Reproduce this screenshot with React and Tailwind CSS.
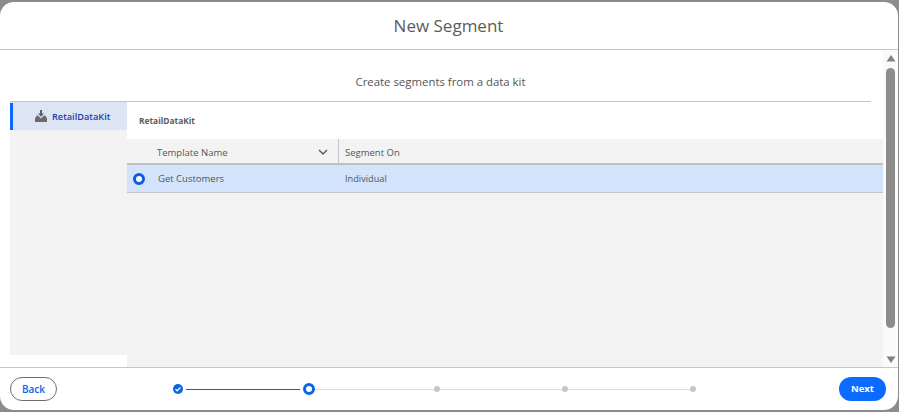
import React from "react";

function Download() {
  return (
    <svg width="14" height="14" viewBox="0 0 14 14" className="shrink-0">
      <path d="M6 1h2v3.500h2L7 7.800 4 4.500h2z" fill="#5f5f5f" />
      <path d="M2.800 6.500H4L7 9.500l3-3h1.200L13 9.200V13H1V9.200z" fill="#6a6a6a" />
    </svg>
  );
}

function Step({ state }) {
  if (state === "done")
    return (
      <span className="w-[10px] h-[10px] rounded-full bg-[#0b63e5] flex items-center justify-center shrink-0">
        <svg width="8" height="8" viewBox="0 0 8 8">
          <path d="M1.500 4.200l1.700 1.600 3.300-3.400" stroke="#fff" strokeWidth="1.300" fill="none" />
        </svg>
      </span>
    );
  if (state === "current")
    return <span className="w-[12px] h-[12px] rounded-full border-[3px] border-[#0b63f0] bg-white shrink-0" />;
  return <span className="w-[6px] h-[6px] rounded-full bg-[#c6c6c6] shrink-0" />;
}

export default function App() {
  return (
    <div className="w-[899px] h-[412px] bg-[#8c8c8c] pt-[2px] pb-[2px] pr-[1px] font-['Open_Sans','Noto_Sans',sans-serif] overflow-hidden">
      <div className="w-full h-full bg-white rounded-[14px] flex flex-col overflow-hidden">
        <div className="h-[48px] shrink-0 border-b border-[#c6c6c6] flex items-center justify-center pr-[1px] text-[17px] text-[#5c5c5c]">
          New Segment
        </div>

        <div className="h-[317px] shrink-0 flex">
          <div className="w-[883px] flex flex-col">
            <div className="pl-[10px] pr-[12px] shrink-0">
              <div className="h-[52px] border-b border-[#c6c6c6] flex items-center justify-center pt-[13px] text-[11.4px] text-[#555555]">
                Create segments from a data kit
              </div>
            </div>
            <div className="flex flex-1 pl-[10px]">
              <div className="w-[117px] h-[253px] bg-[#f3f3f3] shrink-0">
                <div className="h-[28px] bg-[#dbe5f4] flex items-center pl-[3px] relative">
                  <span className="absolute left-0 top-px bottom-0 w-[3px] bg-[#0d66ff]" />
                  <span className="ml-[21px] mr-[4px]"><Download /></span>
                  <span className="text-[9.2px] font-semibold text-[#1b3fb0] pt-[1px]">RetailDataKit</span>
                </div>
              </div>
              <div className="flex-1 flex flex-col">
                <div className="h-[37px] shrink-0 flex items-center pl-[12px] pt-[2px] text-[8.4px] font-bold text-[#5c5c5c]">
                  RetailDataKit
                </div>
                <div className="flex-1 bg-[#f3f3f3]">
                  <div className="h-[26px] flex border-b-2 border-[#c0c0c0] text-[9.5px] text-[#555555]">
                    <div className="w-[212px] flex items-center justify-between pl-[30px] pr-[5px] pt-[4px] border-r border-[#c6c6c6]">
                      <span>Template Name</span>
                      <svg width="10" height="7" viewBox="0 0 10 7" className="mr-[5px] -mt-[2px]">
                        <path d="M1 1l4 4 4-4" stroke="#4a5568" strokeWidth="1.300" fill="none" />
                      </svg>
                    </div>
                    <div className="flex items-center pl-[6px] pt-[4px]">Segment On</div>
                  </div>
                  <div className="h-[28px] flex items-center bg-[#d3e3fb] border-b border-[#c6c6c6] text-[9.5px] text-[#555555]">
                    <span className="w-[12px] h-[12px] rounded-full border-[3px] border-[#0b5de0] bg-white ml-[6px] shrink-0" />
                    <span className="w-[194px] pl-[13px] pt-[1px] shrink-0">Get Customers</span>
                    <span className="pl-[6px] text-[9.2px]">Individual</span>
                  </div>
                </div>
              </div>
            </div>
          </div>

          <div className="w-[15px] bg-[#fafafa] flex flex-col items-center">
            <svg width="10" height="7" viewBox="0 0 10 7" className="mt-[5px] shrink-0">
              <path d="M5 0l4.500 6.500H.5z" fill="#808080" />
            </svg>
            <div className="w-[9px] h-[260px] mt-[6px] rounded-[5px] bg-[#8c8c8c]" />
            <svg width="10" height="7" viewBox="0 0 10 7" className="mt-[28px] shrink-0">
              <path d="M5 7L.5.500h9z" fill="#808080" />
            </svg>
          </div>
        </div>

        <div className="flex-1 border-t border-[#c6c6c6] flex items-center pl-[10px] pr-[12px]">
          <button className="w-[47px] h-[24px] rounded-full border border-[#6e6e6e] text-[10px] font-semibold text-[#0b63f0] bg-white">
            Back
          </button>
          <div className="flex items-center ml-[116px]">
            <Step state="done" />
            <span className="w-[114px] h-px bg-[#1c5fc4] ml-[3px] mr-[3px]" />
            <Step state="current" />
            <span className="w-[119px] h-px bg-[#dcdcdc]" />
            <Step />
            <span className="w-[122px] h-px bg-[#dcdcdc]" />
            <Step />
            <span className="w-[122px] h-px bg-[#dcdcdc]" />
            <Step />
          </div>
          <button className="w-[47px] h-[24px] ml-auto rounded-full bg-[#0b6bff] text-[9.5px] font-bold text-white">
            Next
          </button>
        </div>
      </div>
    </div>
  );
}
